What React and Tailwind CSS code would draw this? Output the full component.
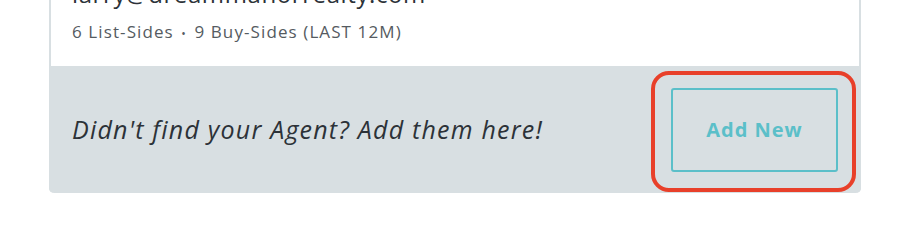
export default function App() {
  return (
    <div className="w-[914px] h-[229px] overflow-hidden bg-white font-['Open_Sans',sans-serif]">
      <div className="ml-[49px] w-[812px] -mt-[30px] rounded-b-[5px] border-x-2 border-b-0 border-[#d8dfe2] bg-white">
        <div className="pl-[21px] pt-[10px] pb-[22px]">
          <p className="text-[24px] leading-[28px] tracking-[0.6px] text-[#2c3238]">larry@dreammanorrealty.com</p>
          <p className="mt-[14px] text-[17px] leading-[20px] tracking-[1.1px] text-[#555b61]">
            6 List-Sides <span className="mx-[2px] text-[12px]">•</span> 9 Buy-Sides (LAST 12M)
          </p>
        </div>
        <div className="-mx-[2px] flex h-[127px] items-center justify-between rounded-b-[5px] bg-[#d8dfe2] pl-[23px] pr-[23px]">
          <p className="text-[25px] italic tracking-[1.2px] text-[#2c3238]">Didn't find your Agent? Add them here!</p>
          <div className="relative">
            <button className="flex h-[84px] w-[167px] items-center justify-center rounded-[3px] border-2 border-[#5bbfc9] text-[20px] font-bold tracking-[1px] text-[#5bbfc9]">
              Add New
            </button>
            <div className="pointer-events-none absolute -top-[17px] -bottom-[20px] -left-[20px] -right-[18px] rounded-[18px] border-4 border-[#e8402a]"></div>
          </div>
        </div>
      </div>
    </div>
  );
}
